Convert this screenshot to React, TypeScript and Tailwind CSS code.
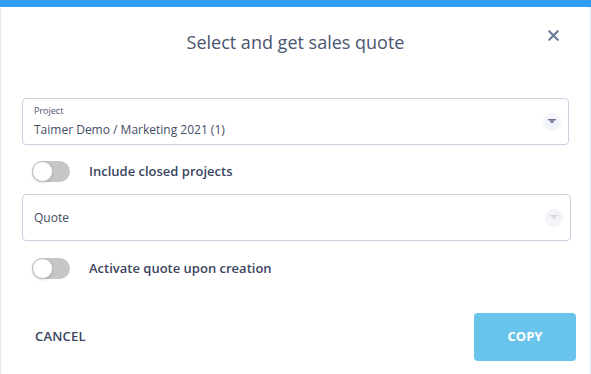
import { X } from 'lucide-react';

function Toggle({ label }: { label: string }) {
  return (
    <div className="flex items-center h-[21px] pl-[10px]">
      <div className="relative w-[38px] h-[21px] rounded-full bg-[#c6c6c6]">
        <div className="absolute left-0 top-0 w-[21px] h-[21px] rounded-full bg-white border border-[#bdbdbd] shadow-sm" />
      </div>
      <span className="ml-[19px] text-[13px] font-semibold text-[#3b4560]">{label}</span>
    </div>
  );
}

function Caret({ faded }: { faded?: boolean }) {
  return (
    <div className="w-[18px] h-[18px] rounded-full bg-[#f3f4f9] flex items-center justify-center">
      <svg width="8" height="5" viewBox="0 0 8 5">
        <rect x="0" y="0" width="8" height="1.2" fill={faded ? '#d4d6e0' : '#6c7090'} />
        <path d="M1 1.2 L7 1.2 L4 4.6 Z" fill={faded ? '#d4d6e0' : '#6c7090'} />
      </svg>
    </div>
  );
}

export default function App() {
  return (
    <div
      className="w-[591px] h-[374px] bg-white border-x border-[#e2eaf4] flex flex-col"
      style={{ fontFamily: '"Open Sans", "Noto Sans", sans-serif' }}
    >
      <div className="h-[7px] bg-[#2e9ff4] -mx-px" />

      <div className="relative flex justify-center pt-[23px]">
        <h2 className="text-[18px] leading-[25px] text-[#4a5570]">Select and get sales quote</h2>
        <X className="absolute right-[28px] top-[20px] text-[#6a7897]" size={17} strokeWidth={3} />
      </div>

      <div className="flex flex-col pl-[21px] pr-[20px] mt-[43px]">
        <div className="h-[47px] w-[547px] border border-[#c9d0df] rounded-[4px] flex items-center pl-[11px] pr-[7px]">
          <div className="flex-1 flex flex-col pt-[1px]">
            <span className="text-[9px] leading-[12px] text-[#4a5368]">Project</span>
            <span className="text-[12px] leading-[18px] mt-[4px] text-[#434d66]">
              Taimer Demo / Marketing 2021 (1)
            </span>
          </div>
          <Caret />
        </div>

        <div className="mt-[16px]">
          <Toggle label="Include closed projects" />
        </div>

        <div className="mt-[12px] h-[47px] w-[549px] border border-[#c9d0df] rounded-[4px] flex items-center pl-[11px] pr-[7px]">
          <span className="flex-1 text-[12px] text-[#434d66]">Quote</span>
          <Caret faded />
        </div>

        <div className="mt-[17px]">
          <Toggle label="Activate quote upon creation" />
        </div>

        <div className="mt-[34px] flex items-center justify-between">
          <button className="ml-[13px] text-[13px] font-semibold text-[#3b4560] tracking-[0.2px]">CANCEL</button>
          <button className="mr-[-6px] w-[102px] h-[48px] rounded-[4px] bg-[#69c4ec] text-white text-[13px] font-bold">
            COPY
          </button>
        </div>
      </div>
    </div>
  );
}
